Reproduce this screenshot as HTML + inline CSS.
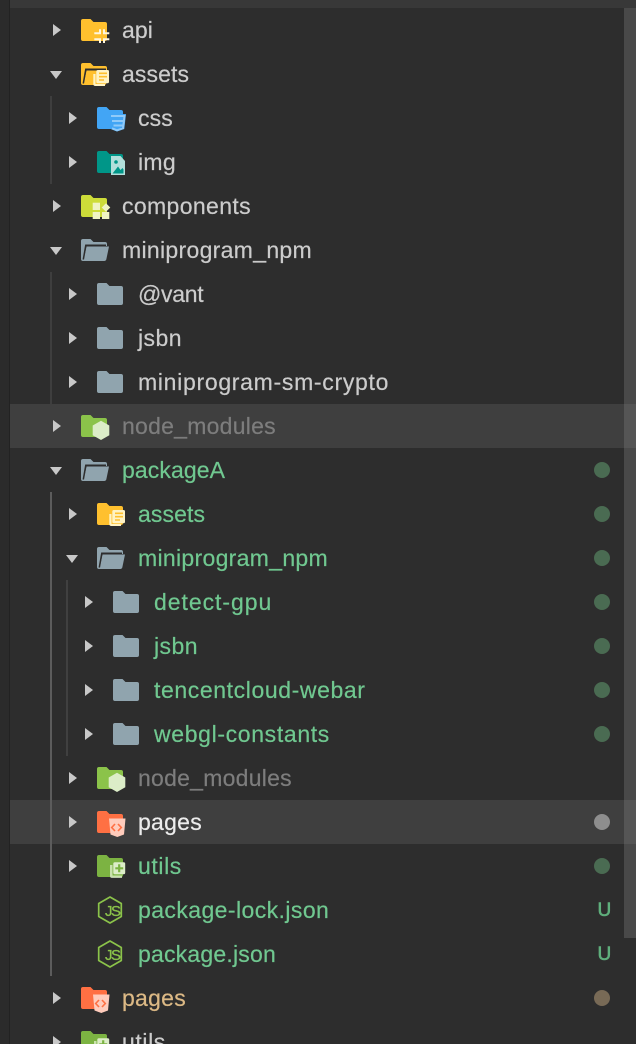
<!DOCTYPE html>
<html><head><meta charset="utf-8">
<style>
html,body{margin:0;padding:0;background:#2d2d2d;}
#p{position:relative;width:636px;height:1044px;overflow:hidden;background:#2d2d2d;font-family:"Liberation Sans",sans-serif;}
.a{position:absolute;}
.t{position:absolute;font-size:23px;line-height:44px;height:44px;white-space:nowrap;color:#ccc;-webkit-text-stroke:.2px currentColor;}
.g{color:#70c890}.n{color:#7d7d7d}.s{color:#ececec}.y{color:#dcb985}
.d{position:absolute;left:594px;width:16px;height:16px;border-radius:50%;background:#4a6b52;}
.u{position:absolute;left:597.500px;font-size:19px;line-height:46px;color:#5fae7c;-webkit-text-stroke:.6px #5fae7c;}
svg.i{position:absolute;overflow:visible;}
</style></head><body><div id="p">
<div class="a" style="left:0;top:0;width:9px;height:1044px;background:#2b2b2b"></div>
<div class="a" style="left:9px;top:0;width:1px;height:1044px;background:#222"></div>
<div class="a" style="left:10px;top:0;width:626px;height:8px;background:#383838"></div>
<div class="a" style="left:10px;top:404px;width:626px;height:44px;background:#3f3f3f"></div>
<div class="a" style="left:10px;top:800px;width:626px;height:44px;background:#3f3f3f"></div>
<div class="a" style="left:624px;top:8px;width:12px;height:930px;background:rgba(120,120,120,.38)"></div>
<div class="a" style="left:50px;top:96px;width:2px;height:88px;background:#3e3e3e"></div>
<div class="a" style="left:50px;top:272px;width:2px;height:132px;background:#3e3e3e"></div>
<div class="a" style="left:50px;top:492px;width:2px;height:484px;background:#5c5c5c"></div>
<div class="a" style="left:66px;top:580px;width:2px;height:176px;background:#404040"></div>

<svg width="0" height="0" style="position:absolute"><defs>
<path id="cf" d="M2 0H9.500L12.500 3H24A2 2 0 0 1 26 5V20A2 2 0 0 1 24 22H2A2 2 0 0 1 0 20V2A2 2 0 0 1 2 0Z"/>
<path id="r" d="M0 0L8 6L0 12Z" fill="#c8c8c8"/>
<path id="dn" d="M0 0H12L6 8Z" fill="#c8c8c8"/>
<g id="blue"><path d="M2 0H9.500L12.500 3H24A2 2 0 0 1 26 5V7H5L3 22H2A2 2 0 0 1 0 20V2A2 2 0 0 1 2 0Z" fill="#90a4ae"/><path d="M5.500 7.500H28L25.300 20.500A2 2 0 0 1 23.500 22H2.500Z" fill="#90a4ae"/><path d="M2.300 20.500L4.800 6.300H25" fill="none" stroke="#2d2d2d" stroke-width="1.500"/></g>
<g id="grey"><use href="#cf" fill="#90a4ae"/></g>
<g id="node"><use href="#cf" fill="#8bc34a"/><path d="M20 5.700L28.300 10.500V20.200L20 25L11.700 20.200V10.500Z" fill="#dcedc8"/></g>
<g id="pg"><use href="#cf" fill="#ff7043"/><path d="M12 7.500H28.500L27 23.500L20.300 26L13.500 23.500Z" fill="#ffccbc"/><path d="M18 13L14.700 16.500L18 20M21 13L24.300 16.500L21 20" fill="none" stroke="#ff7043" stroke-width="1.600"/></g>
<g id="ut"><use href="#cf" fill="#7cb342"/><path d="M13 10H15.500V20.500H25V23H15A2 2 0 0 1 13 21Z" fill="#dcedc8" opacity=".8"/><rect x="16.300" y="7.300" width="11.900" height="11.900" rx="1.500" fill="#dcedc8"/><path d="M22.200 9.300V17.200M18.300 13.300H26.200" stroke="#7cb342" stroke-width="2.200"/></g>
<g id="as"><use href="#cf" fill="#ffc02e"/><path d="M12.300 11H14.500V21H24V23H14A2 2 0 0 1 12.300 21Z" fill="#fff3c4"/><rect x="15.300" y="7" width="12.700" height="13.300" rx="1.500" fill="#fff3c4"/><path d="M18 10.300H26M18 13.700H26M18 17H23" stroke="#ffc02e" stroke-width="1.600"/></g>
<g id="js"><path d="M12 1L23.300 7.500V20.500L12 27L.7 20.500V7.500Z" fill="none" stroke="#8bc34a" stroke-width="1.700" stroke-linejoin="round"/><text x="7" y="20" font-family="Liberation Sans,sans-serif" font-size="15" fill="#8bc34a" stroke="#8bc34a" stroke-width=".3" letter-spacing="-1.500">JS</text></g>
</defs></svg>

<!-- row 0 api -->
<svg class="i" style="left:53px;top:24px" width="8" height="12"><use href="#r"/></svg>
<svg class="i" style="left:81px;top:19px" width="28" height="26"><use href="#cf" fill="#ffc02e"/><path d="M19 10.300V14.300H13.300M23 10.300V14.300H28.300M19 24V20.300H13.300M23 24V20.300H28.300" fill="none" stroke="#fff6dd" stroke-width="2"/></svg>
<div class="t" style="left:122px;top:8px;letter-spacing:.1px">api</div>

<!-- assets -->
<svg class="i" style="left:50px;top:71px" width="12" height="8"><use href="#dn"/></svg>
<svg class="i" style="left:81px;top:63px" width="28" height="26"><path d="M2 0H9.500L12.500 3H24A2 2 0 0 1 26 5V7H5L3 22H2A2 2 0 0 1 0 20V2A2 2 0 0 1 2 0Z" fill="#ffc02e"/><path d="M5.500 7.500H28L25.300 20.500A2 2 0 0 1 23.500 22H2.500Z" fill="#ffc02e"/><path d="M2.300 20.500L4.800 6.300H25" fill="none" stroke="#2d2d2d" stroke-width="1.500"/><path d="M12.300 11H14.500V21H24V23H14A2 2 0 0 1 12.300 21Z" fill="#fff3c4"/><rect x="15.300" y="7" width="12.700" height="13.300" rx="1.500" fill="#fff3c4"/><path d="M18 10.300H26M18 13.700H26M18 17H23" stroke="#ffc02e" stroke-width="1.600"/></svg>
<div class="t" style="left:122px;top:52px;letter-spacing:.1px">assets</div>

<!-- css -->
<svg class="i" style="left:69px;top:112px" width="8" height="12"><use href="#r"/></svg>
<svg class="i" style="left:97px;top:107px" width="30" height="26"><use href="#cf" fill="#42a5f5"/><path d="M11.500 7H29L27.300 22L20 24.500L13.500 22Z" fill="#42a5f5"/><path d="M14 9H27.500L26 21.300L20 23.300L15 21.300M15 14H26.500M16.500 18.500H26" fill="none" stroke="#90caf9" stroke-width="2"/></svg>
<div class="t" style="left:138px;top:96px;letter-spacing:.15px">css</div>

<!-- img -->
<svg class="i" style="left:69px;top:156px" width="8" height="12"><use href="#r"/></svg>
<svg class="i" style="left:97px;top:151px" width="30" height="26"><use href="#cf" fill="#009688"/><path d="M14 5H23.500L28 10V24H14Z" fill="#b2dfdb"/><path d="M15.500 22.500L21 15.500L23.500 19L25.500 17L26.500 18.500V22.500Z" fill="#009688"/><circle cx="19" cy="11" r="1.800" fill="#009688"/></svg>
<div class="t" style="left:138px;top:140px;letter-spacing:.3px">img</div>

<!-- components -->
<svg class="i" style="left:53px;top:200px" width="8" height="12"><use href="#r"/></svg>
<svg class="i" style="left:81px;top:195px" width="30" height="26"><use href="#cf" fill="#cddc39"/><rect x="11.700" y="7.700" width="7.300" height="7.300" fill="#f0f4c3"/><rect x="11.700" y="17" width="7.300" height="7" fill="#f0f4c3"/><rect x="21" y="17" width="7.300" height="7" fill="#f0f4c3"/><path d="M25 8.300L29.300 12.500L25 16.700L20.700 12.500Z" fill="#f0f4c3"/></svg>
<div class="t" style="left:122px;top:184px;letter-spacing:.37px">components</div>

<!-- miniprogram_npm -->
<svg class="i" style="left:50px;top:247px" width="12" height="8"><use href="#dn"/></svg>
<svg class="i" style="left:81px;top:239px" width="28" height="22"><use href="#blue"/></svg>
<div class="t" style="left:122px;top:228px;letter-spacing:.31px">miniprogram_npm</div>

<svg class="i" style="left:69px;top:288px" width="8" height="12"><use href="#r"/></svg>
<svg class="i" style="left:97px;top:283px" width="26" height="22"><use href="#grey"/></svg>
<div class="t" style="left:138px;top:272px;letter-spacing:-.3px">@vant</div>

<svg class="i" style="left:69px;top:332px" width="8" height="12"><use href="#r"/></svg>
<svg class="i" style="left:97px;top:327px" width="26" height="22"><use href="#grey"/></svg>
<div class="t" style="left:138px;top:316px;letter-spacing:.45px">jsbn</div>

<svg class="i" style="left:69px;top:376px" width="8" height="12"><use href="#r"/></svg>
<svg class="i" style="left:97px;top:371px" width="26" height="22"><use href="#grey"/></svg>
<div class="t" style="left:138px;top:360px;letter-spacing:.7px">miniprogram-sm-crypto</div>

<!-- node_modules -->
<svg class="i" style="left:53px;top:420px" width="8" height="12"><use href="#r"/></svg>
<svg class="i" style="left:81px;top:415px" width="30" height="26"><use href="#node"/></svg>
<div class="t n" style="left:122px;top:404px;letter-spacing:.25px">node_modules</div>

<!-- packageA -->
<svg class="i" style="left:50px;top:467px" width="12" height="8"><use href="#dn"/></svg>
<svg class="i" style="left:81px;top:459px" width="28" height="22"><use href="#blue"/></svg>
<div class="t g" style="left:122px;top:448px;letter-spacing:.1px">packageA</div>
<div class="d" style="top:462px"></div>

<svg class="i" style="left:69px;top:508px" width="8" height="12"><use href="#r"/></svg>
<svg class="i" style="left:97px;top:503px" width="30" height="26"><use href="#as"/></svg>
<div class="t g" style="left:138px;top:492px;letter-spacing:.1px">assets</div>
<div class="d" style="top:506px"></div>

<svg class="i" style="left:66px;top:555px" width="12" height="8"><use href="#dn"/></svg>
<svg class="i" style="left:97px;top:547px" width="28" height="22"><use href="#blue"/></svg>
<div class="t g" style="left:138px;top:536px;letter-spacing:.31px">miniprogram_npm</div>
<div class="d" style="top:550px"></div>

<svg class="i" style="left:85px;top:596px" width="8" height="12"><use href="#r"/></svg>
<svg class="i" style="left:113px;top:591px" width="26" height="22"><use href="#grey"/></svg>
<div class="t g" style="left:154px;top:580px;letter-spacing:.95px">detect-gpu</div>
<div class="d" style="top:594px"></div>

<svg class="i" style="left:85px;top:640px" width="8" height="12"><use href="#r"/></svg>
<svg class="i" style="left:113px;top:635px" width="26" height="22"><use href="#grey"/></svg>
<div class="t g" style="left:154px;top:624px;letter-spacing:.45px">jsbn</div>
<div class="d" style="top:638px"></div>

<svg class="i" style="left:85px;top:684px" width="8" height="12"><use href="#r"/></svg>
<svg class="i" style="left:113px;top:679px" width="26" height="22"><use href="#grey"/></svg>
<div class="t g" style="left:154px;top:668px;letter-spacing:.6px">tencentcloud-webar</div>
<div class="d" style="top:682px"></div>

<svg class="i" style="left:85px;top:728px" width="8" height="12"><use href="#r"/></svg>
<svg class="i" style="left:113px;top:723px" width="26" height="22"><use href="#grey"/></svg>
<div class="t g" style="left:154px;top:712px;letter-spacing:.65px">webgl-constants</div>
<div class="d" style="top:726px"></div>

<svg class="i" style="left:69px;top:772px" width="8" height="12"><use href="#r"/></svg>
<svg class="i" style="left:97px;top:767px" width="30" height="26"><use href="#node"/></svg>
<div class="t n" style="left:138px;top:756px;letter-spacing:.25px">node_modules</div>

<svg class="i" style="left:69px;top:816px" width="8" height="12"><use href="#r"/></svg>
<svg class="i" style="left:97px;top:811px" width="30" height="26"><use href="#pg"/></svg>
<div class="t s" style="left:138px;top:800px;letter-spacing:.27px">pages</div>
<div class="d" style="top:814px;background:#8e8e8e"></div>

<svg class="i" style="left:69px;top:860px" width="8" height="12"><use href="#r"/></svg>
<svg class="i" style="left:97px;top:855px" width="30" height="26"><use href="#ut"/></svg>
<div class="t g" style="left:138px;top:844px;letter-spacing:.6px">utils</div>
<div class="d" style="top:858px"></div>

<svg class="i" style="left:98px;top:896px" width="25" height="29"><use href="#js"/></svg>
<div class="t g" style="left:138px;top:888px;letter-spacing:.42px">package-lock.json</div>
<div class="u" style="top:888px">U</div>

<svg class="i" style="left:98px;top:940px" width="25" height="29"><use href="#js"/></svg>
<div class="t g" style="left:138px;top:932px;letter-spacing:.2px">package.json</div>
<div class="u" style="top:932px">U</div>

<svg class="i" style="left:53px;top:992px" width="8" height="12"><use href="#r"/></svg>
<svg class="i" style="left:81px;top:987px" width="30" height="26"><use href="#pg"/></svg>
<div class="t y" style="left:122px;top:976px;letter-spacing:.27px">pages</div>
<div class="d" style="top:990px;background:#786a56"></div>

<svg class="i" style="left:53px;top:1036px" width="8" height="12"><use href="#r"/></svg>
<svg class="i" style="left:81px;top:1031px" width="30" height="26"><use href="#ut"/></svg>
<div class="t" style="left:122px;top:1020px;letter-spacing:.6px">utils</div>
</div></body></html>
